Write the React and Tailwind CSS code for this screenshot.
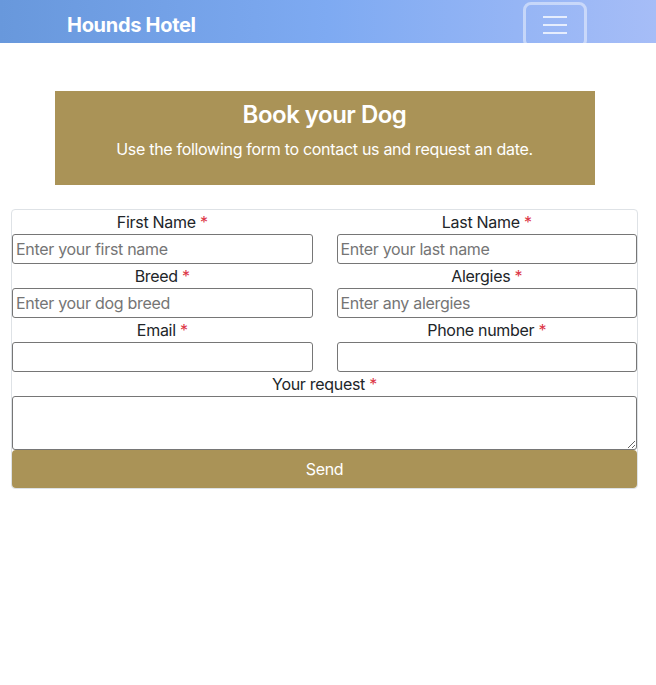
import React from 'react';

const Field = ({ label, placeholder }) => (
  <div className="flex flex-col">
    <label className="h-6 text-center leading-6">
      {label} <span className="text-[#dc3545]">*</span>
    </label>
    <input
      type="text"
      placeholder={placeholder}
      className="h-[30px] w-full rounded-[3px] border border-[#767676] px-[3px] text-base tracking-[-0.3px] text-[#212529] placeholder:text-[#757575] outline-none"
    />
  </div>
);

const App = () => {
  return (
    <div className="min-h-screen bg-white tracking-[-0.3px] text-[#212529]" style={{ fontFamily: 'Inter, "Liberation Sans", sans-serif' }}>
      <nav className="flex h-[43px] items-start justify-between overflow-hidden bg-gradient-to-r from-[#6898dc] via-[#7eaaf2] to-[#a6bdf7] pl-[67px] pr-[69px]">
        <span className="mt-[13px] text-xl font-bold leading-6 tracking-[-0.3px] text-white">Hounds Hotel</span>
        <button className="mt-[2px] flex h-[46px] w-[64px] flex-col items-center justify-start gap-[6px] rounded-lg border-[3px] border-white/45 pt-[11px]">
          <span className="block h-[2px] w-[24px] bg-white/75"></span>
          <span className="block h-[2px] w-[24px] bg-white/75"></span>
          <span className="block h-[2px] w-[24px] bg-white/75"></span>
        </button>
      </nav>

      <div className="w-[649px]">
        <div className="mx-auto mt-12 flex h-[94px] w-[540px] flex-col items-center bg-[#aa9357] pt-[8px] text-white">
          <h1 className="text-2xl font-semibold leading-[32px] tracking-[-0.5px]">Book your Dog</h1>
          <p className="mt-[6px] text-base leading-6">Use the following form to contact us and request an date.</p>
        </div>

        <form className="ml-[11px] mt-6 w-[627px] rounded-[4px] border border-[#dee2e6]" onSubmit={(e) => e.preventDefault()}>
          <div className="grid grid-cols-2 gap-x-6">
            <Field label="First Name" placeholder="Enter your first name" />
            <Field label="Last Name" placeholder="Enter your last name" />
            <Field label="Breed" placeholder="Enter your dog breed" />
            <Field label="Alergies" placeholder="Enter any alergies" />
            <Field label="Email" placeholder="" />
            <Field label="Phone number" placeholder="" />
          </div>
          <div className="flex flex-col">
            <label className="h-6 text-center leading-6">
              Your request <span className="text-[#dc3545]">*</span>
            </label>
            <textarea className="block h-[54px] w-full rounded-[3px] border border-[#767676] px-[3px] outline-none"></textarea>
          </div>
          <button type="submit" className="block h-[38px] w-full rounded-[4px] bg-[#aa9357] text-base tracking-[-0.3px] text-white">
            Send
          </button>
        </form>
      </div>
    </div>
  );
};

export default App;
